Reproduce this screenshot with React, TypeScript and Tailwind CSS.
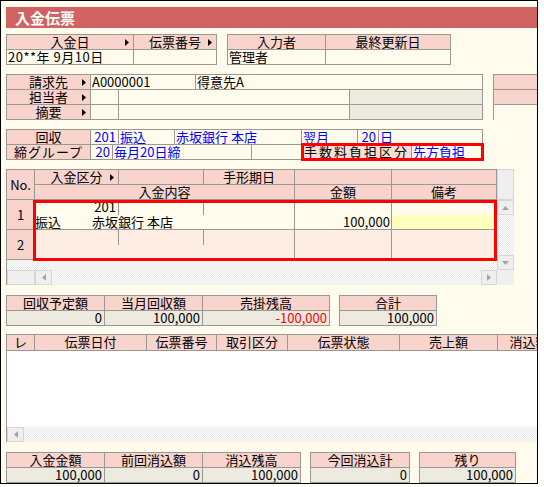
import React from "react";
import clsx from "clsx";

const pink = "bg-[#f9d4cc]";
const gray = "bg-[#edeae0]";
const peach = "bg-[#fdede3]";
const blue = "text-[#0000ff]";
const checker =
  "bg-[repeating-conic-gradient(#ebebeb_0_25%,#fbfbfb_0_50%)] bg-[length:2px_2px]";
const dots =
  "bg-white bg-[radial-gradient(#ededed_0.6px,transparent_0.7px)] bg-[length:4px_4px]";

type Dir = "up" | "down" | "left" | "right";

function Tri({ dir, fill, className }: { dir: Dir; fill: string; className?: string }) {
  const vertical = dir === "up" || dir === "down";
  const paths: Record<Dir, string> = {
    up: "M0 4L3.5 0L7 4Z",
    down: "M0 0L7 0L3.5 4Z",
    left: "M4 0L4 7L0 3.5Z",
    right: "M0 0L4 3.5L0 7Z",
  };
  return (
    <svg
      width={vertical ? 7 : 4}
      height={vertical ? 4 : 7}
      viewBox={vertical ? "0 0 7 4" : "0 0 4 7"}
      className={className}
    >
      <path d={paths[dir]} fill={fill} />
    </svg>
  );
}

interface CellProps {
  w: string;
  h?: string;
  bg?: string;
  align?: "l" | "c" | "r";
  arrow?: boolean;
  className?: string;
  children?: React.ReactNode;
}

function Cell({ w, h = "h-[15px]", bg, align = "c", arrow, className, children }: CellProps) {
  return (
    <div
      className={clsx(
        "relative shrink-0 whitespace-nowrap border-r border-b border-[#9b9893] leading-[14px]",
        w,
        h,
        bg,
        align === "l" && "pl-px text-left",
        align === "c" && "text-center",
        align === "r" && "pr-[2px] text-right",
        className
      )}
    >
      {children}
      {arrow && <Tri dir="right" fill="#000" className="absolute right-[4px] top-[4px]" />}
    </div>
  );
}

function Table({ className, children }: { className?: string; children: React.ReactNode }) {
  return (
    <div className={clsx("shrink-0 border-t border-l border-[#9b9893]", className)}>
      {children}
    </div>
  );
}

function Btn({ dir, className }: { dir: Dir; className?: string }) {
  return (
    <div
      className={clsx(
        "flex shrink-0 items-center justify-center border border-[#d6d6d6] bg-[#efefef]",
        className
      )}
    >
      <Tri dir={dir} fill="#a4a4a4" />
    </div>
  );
}

export default function App() {
  return (
    <div className="h-[487px] w-[544px] bg-white font-['Noto_Sans_CJK_JP','Noto_Sans',sans-serif] text-[13px] text-black">
      <div className="flex h-[484px] w-[538px] flex-col overflow-hidden border border-black bg-[#fffcee] pt-[6px] pl-[5px]">
        {/* title bar */}
        <div className="h-[21px] shrink-0 bg-[#d06262] pl-[9px] text-[15px] leading-[21px] font-bold text-white">
          入金伝票
        </div>

        {/* date / number / operator */}
        <div className="mt-[6px] flex shrink-0">
          <Table>
            <div className="flex">
              <Cell w="w-[127px]" bg={pink} arrow>入金日</Cell>
              <Cell w="w-[83px]" bg={pink} arrow>伝票番号</Cell>
            </div>
            <div className="flex">
              <Cell w="w-[127px]" align="l" className="tracking-[0.5px]">20**年 9月10日</Cell>
              <Cell w="w-[83px]" />
            </div>
          </Table>
          <Table className="ml-[10px]">
            <div className="flex">
              <Cell w="w-[98px]" bg={pink}>入力者</Cell>
              <Cell w="w-[125px]" bg={pink}>最終更新日</Cell>
            </div>
            <div className="flex">
              <Cell w="w-[98px]" align="l">管理者</Cell>
              <Cell w="w-[125px]" />
            </div>
          </Table>
        </div>

        {/* customer block */}
        <div className="mt-[9px] flex shrink-0">
          <Table>
            <div className="flex">
              <Cell w="w-[84px]" bg={pink} arrow>請求先</Cell>
              <Cell w="w-[105px]" align="l">A0000001</Cell>
              <Cell w="w-[287px]" align="l" className="pl-[2px]">得意先A</Cell>
            </div>
            <div className="flex">
              <Cell w="w-[84px]" bg={pink} arrow>担当者</Cell>
              <Cell w="w-[28px]" />
              <Cell w="w-[231px]" />
              <Cell w="w-[133px]" bg={gray} />
            </div>
            <div className="flex">
              <Cell w="w-[84px]" bg={pink} arrow>摘要</Cell>
              <Cell w="w-[28px]" />
              <Cell w="w-[231px]" />
              <Cell w="w-[133px]" bg={gray} />
            </div>
          </Table>
          <Table className="ml-[10px]">
            <Cell w="w-[60px]" bg={pink} />
            <Cell w="w-[60px]" bg={pink} />
          </Table>
        </div>

        {/* collection terms */}
        <div className="relative mt-[9px] flex shrink-0">
          <Table>
            <div className="flex">
              <Cell w="w-[84px]" bg={pink}>回収</Cell>
              <Cell w="w-[28px]" align="r" className={blue}>201</Cell>
              <Cell w="w-[56px]" align="l" className={blue}>振込</Cell>
              <Cell w="w-[127px]" align="l" className={blue}>赤坂銀行 本店</Cell>
              <Cell w="w-[56px]" align="l" className={clsx(blue, "underline")}>翌月</Cell>
              <Cell w="w-[21px]" align="r" className={blue}>20</Cell>
              <Cell w="w-[104px]" align="l" className={blue}>日</Cell>
            </div>
            <div className="flex">
              <Cell w="w-[84px]" bg={pink} className="tracking-[1px]">締グループ</Cell>
              <Cell w="w-[22px]" align="r" className={blue}>20</Cell>
              <Cell w="w-[139px]" align="l" className={blue}>毎月20日締</Cell>
              <Cell w="w-[50px]" />
              <Cell w="w-[110px]" bg="bg-[#f6ddd5]" className="tracking-[2px]">手数料負担区分</Cell>
              <Cell w="w-[71px]" align="l" className={clsx(blue, "underline")}>先方負担</Cell>
            </div>
          </Table>
          <div className="absolute top-[14px] left-[295px] h-[18px] w-[183px] border-[3px] border-[#ff0000]" />
        </div>

        {/* detail grid */}
        <div className="relative mt-[9px] flex shrink-0">
          <div className="flex shrink-0 flex-col border-l border-[#9b9893]">
            <div className="flex border-t border-[#9b9893]">
              <Cell w="w-[28px]" h="h-[30px]" bg={pink} className="leading-[29px]">No.</Cell>
              <div className="flex flex-col">
                <div className="flex">
                  <Cell w="w-[84px]" bg={pink} arrow>入金区分</Cell>
                  <Cell w="w-[85px]" bg={pink} />
                  <Cell w="w-[91px]" bg={pink}>手形期日</Cell>
                  <Cell w="w-[97px]" bg={pink} />
                  <Cell w="w-[105px]" bg={pink} />
                </div>
                <div className="flex">
                  <Cell w="w-[260px]" bg={pink}>入金内容</Cell>
                  <Cell w="w-[97px]" bg={pink}>金額</Cell>
                  <Cell w="w-[105px]" bg={pink}>備考</Cell>
                </div>
              </div>
            </div>

            <div className="flex">
              <Cell w="w-[28px]" h="h-[30px]" bg={pink} className="leading-[29px]">1</Cell>
              <div className="flex h-[30px] w-[260px] shrink-0 flex-col border-r border-b border-[#9b9893] leading-[14px]">
                <div className="flex h-[15px]">
                  <div className="w-[84px] border-r border-[#9b9893] pr-[2px] text-right">201</div>
                  <div className="w-[85px] border-r border-[#9b9893]" />
                </div>
                <div className="flex h-[14px] whitespace-nowrap">
                  <span className="w-[57px]">振込</span>
                  <span>赤坂銀行 本店</span>
                </div>
              </div>
              <div className="flex h-[30px] w-[97px] shrink-0 items-end justify-end border-r border-b border-[#9b9893] pr-px leading-[14px]">
                100,000
              </div>
              <div className="flex h-[30px] w-[105px] shrink-0 flex-col border-r border-b border-[#9b9893]">
                <div className="h-[15px]" />
                <div className="h-[14px] bg-[#ffffbe]" />
              </div>
            </div>

            <div className="flex">
              <Cell w="w-[28px]" h="h-[30px]" bg={pink} className="leading-[29px]">2</Cell>
              <div className={clsx("flex h-[30px] w-[260px] shrink-0 border-r border-b border-[#9b9893]", peach)}>
                <div className="flex h-[15px]">
                  <div className="w-[84px] border-r border-[#9b9893]" />
                  <div className="w-[85px] border-r border-[#9b9893]" />
                </div>
              </div>
              <Cell w="w-[97px]" h="h-[30px]" bg={peach} />
              <Cell w="w-[105px]" h="h-[30px]" bg={peach} />
            </div>

            <div className={clsx("h-[10px] w-[490px]", checker)} />

            <div className="flex h-[15px]">
              <div className="w-[28px] shrink-0 border border-[#d6d6d6] bg-[#efefef]" />
              <Btn dir="left" className="w-[17px]" />
              <div className={clsx("w-[429px] shrink-0", checker)} />
              <Btn dir="right" className="w-[16px]" />
            </div>
          </div>

          <div className="flex w-[17px] shrink-0 flex-col">
            <div className="h-[31px] shrink-0 border border-[#d6d6d6] bg-[#efefef]" />
            <Btn dir="up" className="h-[15px]" />
            <div className={clsx("h-[40px] shrink-0", checker)} />
            <Btn dir="down" className="h-[15px]" />
            <div className="h-[15px] shrink-0 bg-[#efefef]" />
          </div>

          <div className="absolute top-[31px] left-[27px] h-[61px] w-[464px] border-[3px] border-[#ff0000]" />
        </div>

        {/* totals */}
        <div className="mt-[10px] flex shrink-0">
          <Table>
            <div className="flex">
              <Cell w="w-[98px]" bg={pink}>回収予定額</Cell>
              <Cell w="w-[98px]" bg={pink}>当月回収額</Cell>
              <Cell w="w-[127px]" bg={pink}>売掛残高</Cell>
            </div>
            <div className="flex">
              <Cell w="w-[98px]" bg={gray} align="r">0</Cell>
              <Cell w="w-[98px]" bg={gray} align="r">100,000</Cell>
              <Cell w="w-[127px]" bg={gray} align="r" className="text-[#ff0000]">-100,000</Cell>
            </div>
          </Table>
          <Table className="ml-[9px]">
            <Cell w="w-[97px]" bg={pink}>合計</Cell>
            <Cell w="w-[97px]" bg={gray} align="r">100,000</Cell>
          </Table>
        </div>

        {/* matching list */}
        <div className="mt-[8px] flex shrink-0 flex-col border-t border-l border-[#9b9893]">
          <div className="flex">
            <Cell w="w-[28px]" h="h-[16px]" bg={pink}>レ</Cell>
            <Cell w="w-[112px]" h="h-[16px]" bg={pink}>伝票日付</Cell>
            <Cell w="w-[70px]" h="h-[16px]" bg={pink}>伝票番号</Cell>
            <Cell w="w-[71px]" h="h-[16px]" bg={pink}>取引区分</Cell>
            <Cell w="w-[112px]" h="h-[16px]" bg={pink}>伝票状態</Cell>
            <Cell w="w-[98px]" h="h-[16px]" bg={pink}>売上額</Cell>
            <Cell w="w-[63px]" h="h-[16px]" bg={pink}>消込額</Cell>
          </div>
          <div className={clsx("h-[76px]", dots)} />
          <div className="flex h-[15px]">
            <Btn dir="left" className="w-[17px]" />
            <div className={clsx("flex-1", checker)} />
          </div>
        </div>

        {/* balance */}
        <div className="mt-[10px] flex shrink-0">
          <Table>
            <div className="flex">
              <Cell w="w-[98px]" bg={pink}>入金金額</Cell>
              <Cell w="w-[98px]" bg={pink}>前回消込額</Cell>
              <Cell w="w-[98px]" bg={pink}>消込残高</Cell>
            </div>
            <div className="flex">
              <Cell w="w-[98px]" bg={gray} align="r">100,000</Cell>
              <Cell w="w-[98px]" bg={gray} align="r">0</Cell>
              <Cell w="w-[98px]" bg={gray} align="r">100,000</Cell>
            </div>
          </Table>
          <Table className="ml-[9px]">
            <Cell w="w-[99px]" bg={pink}>今回消込計</Cell>
            <Cell w="w-[99px]" bg={gray} align="r">0</Cell>
          </Table>
          <Table className="ml-[9px]">
            <Cell w="w-[96px]" bg={pink}>残り</Cell>
            <Cell w="w-[96px]" bg={gray} align="r">100,000</Cell>
          </Table>
        </div>
      </div>
    </div>
  );
}
